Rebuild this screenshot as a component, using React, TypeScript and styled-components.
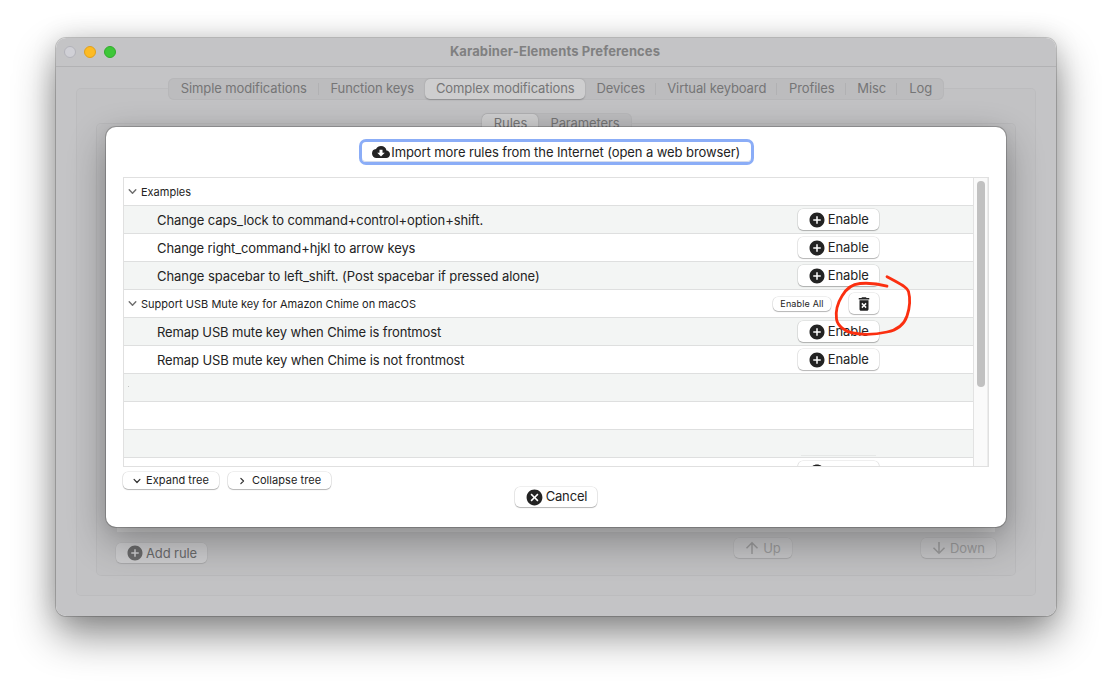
import React from "react";
import styled, { createGlobalStyle, css } from "styled-components";
import { MdAddCircle, MdCancel, MdCloudDownload, MdDeleteForever } from "react-icons/md";

const Global = createGlobalStyle`
  * { box-sizing: border-box; }
  html, body { margin: 0; background: #fff; overflow: hidden; }
  body { font-family: Inter, "Liberation Sans", sans-serif; font-size: 13px; color: #232323; }
`;

const Desktop = styled.main`
  width: 1112px;
  height: 690px;
  padding: 38px 56px;
  overflow: hidden;
`;

const Window = styled.section`
  position: relative;
  width: 1000px;
  height: 578px;
  border-radius: 10px;
  background: #c4c4c6;
  overflow: hidden;
`;

const WindowShadow = styled.div`
  width: 1000px;
  border-radius: 10px;
  box-shadow: 0 0 0 1px rgba(0, 0, 0, 0.18), 0 19px 42px rgba(0, 0, 0, 0.46), 0 0 26px rgba(0, 0, 0, 0.13);
`;

const TitleBar = styled.header`
  display: grid;
  grid-template-columns: 60px 1fr 62px;
  align-items: center;
  height: 29px;
  border-bottom: 1px solid #b2b2b4;
`;

const Lights = styled.div`
  display: flex;
  gap: 8px;
  padding-left: 8px;
`;

const Light = styled.span<{ $fill: string; $edge: string }>`
  flex: none;
  width: 12px;
  height: 12px;
  border-radius: 50%;
  background: ${(p) => p.$fill};
  border: 1px solid ${(p) => p.$edge};
`;

const Title = styled.h1`
  margin: 0;
  padding-bottom: 2px;
  text-align: center;
  font-size: 13px;
  font-weight: 700;
  line-height: 16px;
  color: #808081;
`;

const Text = styled.span<{ $track?: number; $gap?: number }>`
  white-space: pre;
  margin-left: ${(p) => p.$gap ?? 0}px;
  letter-spacing: ${(p) => p.$track ?? 0}px;
`;

const Pane = styled.div`
  display: flex;
  flex-direction: column;
  align-items: center;
  margin: 21px 20px 0;
  height: 508px;
  border: 1px solid rgba(0, 0, 0, 0.035);
  border-radius: 5px;
  background: rgba(0, 0, 0, 0.006);
`;

const InnerPane = styled.div`
  display: flex;
  flex-direction: column;
  align-items: center;
  width: 920px;
  height: 453px;
  margin-top: 23px;
  border: 1px solid rgba(0, 0, 0, 0.04);
  border-radius: 5px;
  background: rgba(0, 0, 0, 0.006);
`;

const TabBar = styled.nav<{ $shift?: number }>`
  display: flex;
  flex: none;
  height: 22px;
  margin-top: -11px;
  margin-left: ${(p) => p.$shift ?? 0}px;
  border-radius: 6px;
  background: #bcbcbe;
  box-shadow: inset 0 0 0 1px #b7b7b9;
`;

const Tab = styled.span<{ $w: number; $on?: boolean; $rule?: boolean }>`
  display: flex;
  align-items: center;
  justify-content: center;
  width: ${(p) => p.$w}px;
  padding-bottom: 2px;
  color: #757576;
  line-height: 16px;
  ${(p) =>
    p.$rule &&
    css`
      background: linear-gradient(#b1b1b3, #b1b1b3) right center / 1px 12px no-repeat;
    `}
  ${(p) =>
    p.$on &&
    css`
      margin: 1px 0;
      background: #cececf;
      border-radius: 5px;
      box-shadow: 0 0.5px 1.5px rgba(0, 0, 0, 0.24);
    `}
`;

const RuleList = styled.div`
  flex: 1;
  width: 878px;
  margin-top: 12px;
  background: rgba(255, 255, 255, 0.22);
`;

const PaneFooter = styled.div`
  display: flex;
  align-items: flex-start;
  flex: none;
  width: 880px;
  height: 43px;
  padding-top: 6px;
`;

const PushButton = styled.button<{ $w: number; $h?: number; $size?: number; $lift?: number }>`
  display: inline-flex;
  align-items: center;
  justify-content: center;
  flex: none;
  width: ${(p) => p.$w}px;
  height: ${(p) => p.$h ?? 21}px;
  padding: 0;
  border: 0;
  border-radius: 5px;
  background: #fff;
  color: #232323;
  font-family: inherit;
  font-size: ${(p) => p.$size ?? 13}px;
  line-height: 16px;
  box-shadow: 0 0 0 0.6px rgba(0, 0, 0, 0.13), 0 1px 1px rgba(0, 0, 0, 0.24);
  svg { flex: none; }
  ${Text} { padding-bottom: ${(p) => p.$lift ?? 0}px; }
`;

const DimButton = styled(PushButton)<{ $off?: boolean }>`
  background: ${(p) => (p.$off ? "rgba(255,255,255,0.09)" : "rgba(255,255,255,0.2)")};
  color: ${(p) => (p.$off ? "#9b9b9c" : "#6a6a6b")};
  box-shadow: 0 0 0 0.5px rgba(0, 0, 0, 0.05), 0 1px 1px rgba(0, 0, 0, 0.1);
`;

const AddButton = styled(DimButton)`
  margin: 5px 527px 0 0;
`;

const UpButton = styled(DimButton)`
  margin-right: 129px;
`;

const Sheet = styled.section`
  position: absolute;
  left: 50px;
  top: 89px;
  width: 900px;
  height: 400px;
  padding: 15px 17px 0;
  display: flex;
  flex-direction: column;
  background: #fff;
  border-radius: 10px;
  box-shadow: 0 0 0 1px rgba(0, 0, 0, 0.2), 0 14px 38px rgba(0, 0, 0, 0.32), 0 0 16px rgba(0, 0, 0, 0.05);
`;

const ImportButton = styled(PushButton)`
  align-self: center;
  border-radius: 4px;
  box-shadow: 0 0 0 3px #8badf7, inset 0 -1px 0 #d5dcec;
`;

const TableFrame = styled.div`
  display: grid;
  grid-template-columns: 1fr 15px;
  margin-top: 15px;
  width: 866px;
  height: 290px;
  border: 1px solid #e0e0e0;
  overflow: hidden;
`;

const Rows = styled.div`
  overflow: hidden;
`;

const Row = styled.div<{ $group?: boolean }>`
  display: grid;
  grid-template-columns: 1fr 260px;
  align-items: center;
  height: 28px;
  padding-left: ${(p) => (p.$group ? 4 : 33)}px;
  border-bottom: 1px solid #dedfdf;
  font-size: ${(p) => (p.$group ? 11 : 13)}px;
  &:nth-child(even) { background: #f3f5f4; }
`;

const Label = styled.div`
  display: flex;
  align-items: center;
  gap: 4px;
  line-height: 16px;
`;

const Speck = styled.span`
  width: 1px;
  height: 1px;
  margin: -2px 0 0 -29px;
  background: #c2c4c3;
`;

const Actions = styled.div`
  display: flex;
  align-items: center;
  justify-content: flex-end;
  gap: 18px;
  padding-right: 94px;
`;

const ClippedEdge = styled.span`
  width: 75px;
  height: 1px;
  margin: 24px 3px 0 0;
  background: #e6e8e7;
`;

const Track = styled.div`
  border-left: 1px solid #e2e2e2;
  border-right: 1px solid #ececec;
  background: #fafafa;
  padding: 3px 3px 0;
`;

const Thumb = styled.div`
  width: 8px;
  height: 206px;
  border-radius: 4px;
  background: #c1c1c1;
`;

const TreeButtons = styled.div`
  display: flex;
  gap: 9px;
  margin-top: 5px;
`;

const CancelSlot = styled.div`
  display: flex;
  justify-content: center;
  margin-top: -2px;
`;

const Marker = styled.svg`
  position: absolute;
  left: 774px;
  top: 232px;
  pointer-events: none;
`;

const Chevron = ({ dir, color = "#333", size = 9 }: { dir: "down" | "right"; color?: string; size?: number }) => (
  <svg width={size} height={size} viewBox="0 0 9 9" fill="none" stroke={color} strokeWidth="1.4" strokeLinecap="round" strokeLinejoin="round">
    <path d={dir === "down" ? "M1.2 2.7 4.5 6.2 7.8 2.7" : "M3.2 1.5 6.2 4.5 3.2 7.5"} />
  </svg>
);

const Arrow = ({ up }: { up?: boolean }) => (
  <svg width="14" height="14" viewBox="0 0 14 14" fill="none" stroke="currentColor" strokeWidth="1.5">
    <path d={up ? "M7 13V2M1.5 7.3 7 1.8l5.500 5.5" : "M7 1v11M1.5 6.7 7 12.2l5.500-5.5"} />
  </svg>
);

const EnableButton = ({ clipped }: { clipped?: boolean }) => (
  <PushButton $w={81} $lift={2}>
    <MdAddCircle size={18} />
    {clipped ? <svg width="43" height="16" /> : <Text $gap={1.5} $track={-0.05}>Enable</Text>}
  </PushButton>
);

type Item = {
  kind: "group" | "rule" | "blank" | "speck" | "edge" | "clipped";
  text?: string;
  removable?: boolean;
  track?: number;
};

const items: Item[] = [
  { kind: "group", text: "Examples" },
  { kind: "rule", text: "Change caps_lock to command+control+option+shift.", track: -0.085 },
  { kind: "rule", text: "Change right_command+hjkl to arrow keys", track: -0.11 },
  { kind: "rule", text: "Change spacebar to left_shift. (Post spacebar if pressed alone)", track: -0.065 },
  { kind: "group", text: "Support USB Mute key for Amazon Chime on macOS", removable: true, track: 0.02 },
  { kind: "rule", text: "Remap USB mute key when Chime is frontmost", track: -0.12 },
  { kind: "rule", text: "Remap USB mute key when Chime is not frontmost", track: -0.11 },
  { kind: "speck" },
  { kind: "blank" },
  { kind: "edge" },
  { kind: "clipped" },
];

const tabs = [
  { text: "Simple modifications", w: 151, rule: true },
  { text: "Function keys", w: 106 },
  { text: "Complex modifications", w: 160, on: true },
  { text: "Devices", w: 71, rule: true },
  { text: "Virtual keyboard", w: 121, rule: true },
  { text: "Profiles", w: 69, rule: true },
  { text: "Misc", w: 51, rule: true },
  { text: "Log", w: 47 },
];

export default function App() {
  return (
    <Desktop>
      <Global />
      <WindowShadow>
        <Window>
          <TitleBar>
            <Lights>
              <Light $fill="#d0d0d6" $edge="#b3b3ba" />
              <Light $fill="#fdbb24" $edge="#e0a01c" />
              <Light $fill="#3ec739" $edge="#32ab2d" />
            </Lights>
            <Title><Text $track={0.1}>Karabiner-Elements Preferences</Text></Title>
          </TitleBar>
          <Pane>
            <TabBar>
              {tabs.map((t) => (
                <Tab key={t.text} $w={t.w} $on={t.on} $rule={t.rule}><Text $gap={0.5} $track={-0.1}>{t.text}</Text></Tab>
              ))}
            </TabBar>
            <InnerPane>
              <TabBar $shift={2}>
                <Tab $w={56} $on><Text $gap={1} $track={-0.05}>Rules</Text></Tab>
                <Tab $w={94}><Text $track={-0.12}>Parameters</Text></Tab>
              </TabBar>
              <RuleList />
              <PaneFooter>
                <AddButton $w={91} $h={20} $lift={1}><MdAddCircle size={18} /><Text $gap={2} $track={-0.1}>Add rule</Text></AddButton>
                <UpButton $w={58} $h={20} $off $lift={1}><Arrow up /><Text $gap={4}>Up</Text></UpButton>
                <DimButton $w={75} $h={20} $off $lift={1}><Arrow /><Text $gap={4} $track={-0.1}>Down</Text></DimButton>
              </PaneFooter>
            </InnerPane>
          </Pane>
          <Sheet>
            <ImportButton $w={389} $h={20}>
              <MdCloudDownload size={18} />
              <Text $gap={1.5} $track={-0.09}>Import more rules from the Internet (open a web browser)</Text>
            </ImportButton>
            <TableFrame>
              <Rows>
                {items.map((it, i) => (
                  <Row key={i} $group={it.kind === "group"}>
                    <Label>
                      {it.kind === "group" && <Chevron dir="down" color="#6e6e6e" />}
                      {it.kind === "speck" && <Speck />}
                      {it.text && <Text $track={it.track}>{it.text}</Text>}
                    </Label>
                    <Actions>
                      {it.kind === "rule" && <EnableButton />}
                      {it.kind === "clipped" && <EnableButton clipped />}
                      {it.kind === "edge" && <ClippedEdge />}
                      {it.removable && (
                        <>
                          <PushButton $w={58} $h={14} $size={9}><Text $track={0.15}>Enable All</Text></PushButton>
                          <PushButton $w={30}><MdDeleteForever size={18} /></PushButton>
                        </>
                      )}
                    </Actions>
                  </Row>
                ))}
              </Rows>
              <Track><Thumb /></Track>
            </TableFrame>
            <TreeButtons>
              <PushButton $w={96} $h={17} $size={11} $lift={2}><Chevron dir="down" size={8} /><Text $gap={5} $track={0.05}>Expand tree</Text></PushButton>
              <PushButton $w={103} $h={17} $size={11} $lift={2}><Chevron dir="right" size={8} /><Text $gap={6} $track={0.05}>Collapse tree</Text></PushButton>
            </TreeButtons>
            <CancelSlot>
              <PushButton $w={82} $h={20} $lift={2}><MdCancel size={19} /><Text $gap={2} $track={-0.15}>Cancel</Text></PushButton>
            </CancelSlot>
          </Sheet>
          <Marker width="90" height="70" viewBox="830 270 90 70" fill="none" stroke="#fb2f10" strokeWidth="2.8" strokeLinecap="round" strokeLinejoin="round">
            <path d="M887 286.2C879 284 868 282.8 860 283.5C851 284.3 846 289 842 296C837 304 835.5 312 836.5 319C837.5 326 845 331.5 853 333C863 335 876 334.5 887 332C897 330 904 325 907 316C910 307 910 297 908.5 291.5C907 287 902 285 887 276.7" />
          </Marker>
        </Window>
      </WindowShadow>
    </Desktop>
  );
}
